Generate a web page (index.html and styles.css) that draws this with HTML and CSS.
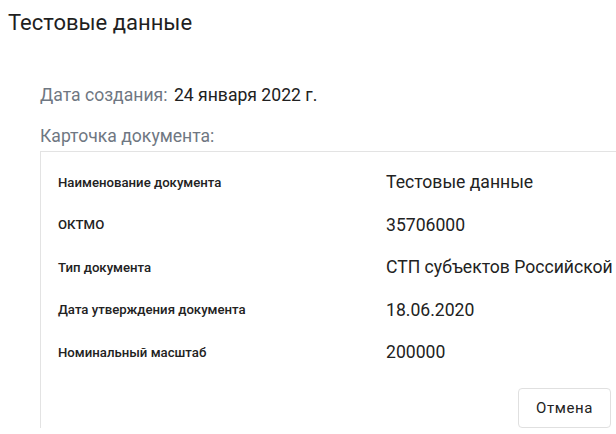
FILE: index.html
```html
<!DOCTYPE html>
<html lang="ru">
<head>
<meta charset="utf-8">
<link rel="stylesheet" href="styles.css">
</head>
<body>
<div class="dialog">
  <h1 class="title">Тестовые данные</h1>
  <div class="content">
    <div class="created"><span class="muted">Дата создания:</span> <span class="val">24 января 2022 г.</span></div>
    <div class="muted card-label">Карточка документа:</div>
    <div class="card">
      <div class="row"><div class="k">Наименование документа</div><div class="v">Тестовые данные</div></div>
      <div class="row"><div class="k">ОКТМО</div><div class="v">35706000</div></div>
      <div class="row"><div class="k">Тип документа</div><div class="v">СТП субъектов Российской</div></div>
      <div class="row"><div class="k">Дата утверждения документа</div><div class="v">18.06.2020</div></div>
      <div class="row"><div class="k">Номинальный масштаб</div><div class="v">200000</div></div>
      <div class="actions"><button class="btn">Отмена</button></div>
    </div>
  </div>
</div>
</body>
</html>
```
FILE: styles.css
```css
html, body { margin: 0; padding: 0; background: #fff; overflow: hidden; }
body { font-family: Roboto, "Noto Sans", sans-serif; color: #212121; width: 616px; height: 434px; }
.dialog { padding: 8px 0 0 8px; }
.title { margin: 0; font-size: 22px; font-weight: 400; line-height: 30px; color: #1f1f1f; }
.content { padding: 46px 0 0 32px; }
.created { font-size: 17.6px; line-height: 22px; }
.muted { color: #6f7782; }
.val { color: #212121; margin-left: 2px; }
.card-label { font-size: 17.6px; line-height: 22px; margin-top: 19px; }
.card { margin-top: 4px; border-top: 1px solid #e3e3e3; border-left: 1px solid #e3e3e3; width: 640px; padding: 9px 0 0 17px; box-sizing: border-box; }
.row { display: flex; align-items: center; height: 42.5px; white-space: nowrap; }
.k { width: 328px; flex: none; font-size: 13.2px; font-weight: 500; color: #222; }
.v { font-size: 17.6px; color: #222; }
.actions { width: 553px; display: flex; justify-content: flex-end; padding-top: 14px; }
.btn { font-family: Roboto, sans-serif; font-size: 15px; letter-spacing: 0.6px; color: #222; background: #fff; border: 1px solid #e0e0e0; border-radius: 4px; width: 93px; height: 40px; padding: 0; }
```
